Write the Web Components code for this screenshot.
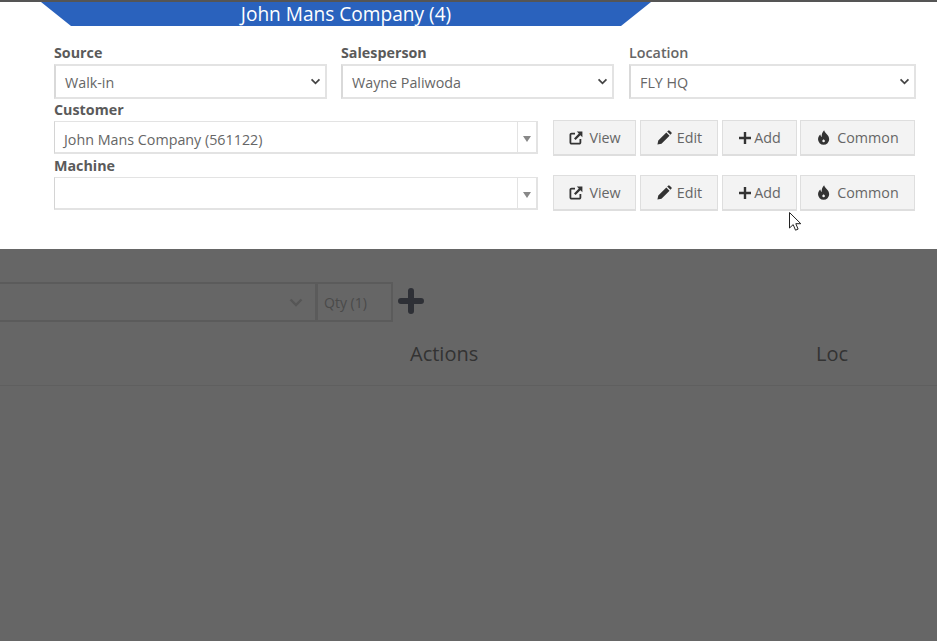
<!DOCTYPE html>
<html>
<head>
<meta charset="utf-8">
<style>
  html, body { margin: 0; height: 100%; overflow: hidden; background: #666; }
  body { font-family: "Open Sans", "Liberation Sans", sans-serif; color: #555; }
</style>
</head>
<body>
<order-panel>
  <order-banner slot="banner">John Mans Company (4)</order-banner>
  <div slot="selects">
    <form-select label="Source" value="Walk-in"></form-select>
    <form-select label="Salesperson" value="Wayne Paliwoda"></form-select>
    <form-select label="Location" value="FLY HQ" light style="margin-left:1px"></form-select>
  </div>
  <lookup-row label="Customer" value="John Mans Company (561122)"></lookup-row>
  <lookup-row label="Machine" value="" compact></lookup-row>
</order-panel>
<dim-area></dim-area>
<mouse-cursor></mouse-cursor>

<script>
const ICONS = {
  view: `<svg viewBox="0 0 14 14" width="14" height="14"><path d="M6 2.600H2.600A1.200 1.200 0 0 0 1.400 3.800v7.600a1.200 1.200 0 0 0 1.200 1.200h7.600a1.200 1.200 0 0 0 1.200-1.200V8" fill="none" stroke="#333" stroke-width="1.800"/><path d="M7.800 .6h5.600v5.600l-2-2L6.600 9 5 7.400 9.800 2.600z" fill="#333"/></svg>`,
  edit: `<svg viewBox="0 0 14 14" width="15" height="15"><path d="M.4 13.600l.8-3.800 7.500-7.500 3 3-7.500 7.500zM9.500 1.500l.9-.9a1 1 0 0 1 1.400 0l1.600 1.600a1 1 0 0 1 0 1.400l-.9.9z" fill="#333"/></svg>`,
  add: `<svg viewBox="0 0 14 14" width="14" height="14"><path d="M5.800 1h2.400v4.800H13v2.400H8.200V13H5.800V8.200H1V5.800h4.800z" fill="#333"/></svg>`,
  common: `<svg viewBox="0 0 14 14" width="15" height="15"><path fill-rule="evenodd" d="M7.600.3c.4 2.600 4.700 4.300 4.700 8.300a5.200 5.200 0 0 1-10.400 0c0-2 1-3.300 2.200-4.300.1 1.100.5 1.800 1.200 2.200C5.200 4.300 5.900 2 7.600.3zM7.100 8.600c-.6.600-1.200 1-1.200 1.700a1.200 1.200 0 0 0 2.400 0c0-.7-.6-1.100-1.200-1.700z" fill="#333"/></svg>`
};
const CHEVRON = `<svg viewBox="0 0 12 8" width="11" height="7"><path d="M1.500 1.500L6 6l4.500-4.500" fill="none" stroke="#444" stroke-width="2"/></svg>`;

class OrderPanel extends HTMLElement {
  constructor() {
    super();
    this.attachShadow({ mode: "open" });
    this.shadowRoot.innerHTML = `
      <style>
        :host{
          display:block;
          height:247px;
          background:#fff;
          border-top:2px solid #555;
          border-bottom:1px solid #d8d8d8;
          margin-bottom:-1px;
        }
        #body{
          display:flex;
          flex-direction:column;
          padding:17px 21px 0 54px;
        }
        ::slotted([slot="selects"]){
          display:grid;
          grid-template-columns:273px 273px 288px;
          column-gap:14px;
        }
      </style>
      <slot name="banner"></slot>
      <div id="body">
        <slot name="selects"></slot>
        <slot></slot>
      </div>
    `;
  }
}
customElements.define("order-panel", OrderPanel);

class OrderBanner extends HTMLElement {
  constructor() {
    super();
    this.attachShadow({ mode: "open" });
    this.shadowRoot.innerHTML = `
      <style>
        :host{
          display:block;
          height:24px;
          margin:0 286px 0 41px;
          background:#2a62bd;
          clip-path:polygon(0 0,100% 0,580px 100%,30px 100%);
          color:#fff;
          font-size:19.1px;
          line-height:25px;
          text-align:center;
        }
      </style>
      <slot></slot>
    `;
  }
}
customElements.define("order-banner", OrderBanner);

class FormSelect extends HTMLElement {
  constructor() {
    super();
    this.attachShadow({ mode: "open" });
    const light = this.hasAttribute("light");
    this.shadowRoot.innerHTML = `
      <style>
        :host{ display:block; }
        label{
          display:block;
          font-size:14.3px;
          font-weight:${light ? 600 : 700};
          line-height:19px;
          color:${light ? "#666" : "#5a5a5a"};
          margin-bottom:2px;
        }
        #box{
          display:flex;
          align-items:center;
          justify-content:space-between;
          height:35px;
          box-sizing:border-box;
          padding:0 4px 0 9px;
          border:2px solid #e3e3e3;
          border-left-color:#d9d9d9;
          background:#fff;
          font-size:14.3px;
          color:#666;
        }
        #box span{ padding-top:1px; }
      </style>
      <label>${this.getAttribute("label")}</label>
      <div id="box"><span>${this.getAttribute("value")}</span>${CHEVRON}</div>
    `;
  }
}
customElements.define("form-select", FormSelect);

class ActionButton extends HTMLElement {
  constructor() {
    super();
    this.attachShadow({ mode: "open" });
    this.shadowRoot.innerHTML = `
      <style>
        :host{
          display:flex;
          align-items:center;
          justify-content:center;
          gap:${this.getAttribute("gap") || 6}px;
          box-sizing:border-box;
          height:100%;
          width:${this.getAttribute("w")}px;
          padding-left:${this.getAttribute("pad") || 0}px;
          background:#f3f3f3;
          border:1px solid #dedede;
          border-bottom-width:2px;
          font-size:14.3px;
          color:#666;
        }
        svg{ display:block; flex:none; }
      </style>
      ${ICONS[this.getAttribute("icon")]}<slot></slot>
    `;
  }
}
customElements.define("action-button", ActionButton);

class LookupRow extends HTMLElement {
  constructor() {
    super();
    this.attachShadow({ mode: "open" });
    this.shadowRoot.innerHTML = `
      <style>
        :host{
          display:grid;
          grid-template-columns:484px 1fr;
          column-gap:15px;
          height:56px;
        }
        label{
          display:block;
          font-size:14.3px;
          font-weight:700;
          line-height:19px;
          color:#5a5a5a;
          margin-top:1px;
        }
        #combo{
          display:flex;
          align-items:stretch;
          height:33px;
          box-sizing:border-box;
          border:2px solid #e3e3e3;
          border-top-width:1px;
          border-left:1px solid #d4d4d4;
          margin-top:2px;
          background:#fff;
        }
        #text{
          flex:1;
          padding:4px 0 0 9px;
          font-size:14.3px;
          line-height:28px;
          color:#666;
          height:26px;
        }
        #arrow{
          width:18px;
          border-left:1px solid #e3e3e3;
          display:flex;
          align-items:center;
          justify-content:center;
        }
        #arrow i{
          width:0;height:0;
          margin-top:3px;
          border:4px solid transparent;
          border-top:6px solid #888;
          border-bottom:0;
        }
        #actions{
          display:flex;
          gap:4px;
          height:36px;
          margin-top:21px;
        }
        :host([compact]) #actions{ margin-top:20px; }
        #actions action-button:nth-child(3){ margin-right:-1px; }
      </style>
      <div>
        <label>${this.getAttribute("label")}</label>
        <div id="combo"><div id="text">${this.getAttribute("value")}</div><div id="arrow"><i></i></div></div>
      </div>
      <div id="actions">
        <action-button icon="view" w="83" pad="1">View</action-button>
        <action-button icon="edit" w="78" gap="5" pad="1">Edit</action-button>
        <action-button icon="add" w="75" gap="2">Add</action-button>
        <action-button icon="common" w="115" gap="6">Common</action-button>
      </div>
    `;
  }
}
customElements.define("lookup-row", LookupRow);

class DimArea extends HTMLElement {
  constructor() {
    super();
    this.attachShadow({ mode: "open" });
    this.shadowRoot.innerHTML = `
      <style>
        :host{ display:block; height:392px; background:#666; }
        #line{
          display:flex;
          align-items:stretch;
          height:40px;
          padding-top:33px;
        }
        #pick{
          width:317px;
          box-sizing:border-box;
          border:2px solid #5b5b5b;
          border-left:0;
          display:flex;
          align-items:center;
          justify-content:flex-end;
          padding-right:12px;
        }
        #qty{
          width:77px;
          box-sizing:border-box;
          margin-left:-1px;
          border:2px solid #5b5b5b;
          padding-left:6px;
          font-size:14px;
          line-height:38px;
          color:#4a4a4a;
        }
        #plus{ margin:6px 0 0 5px; display:block; }
        #head{
          display:grid;
          grid-template-columns:410px 406px 1fr;
          height:64px;
          box-sizing:border-box;
          border-bottom:1px solid #5f5f5f;
          font-size:20px;
          line-height:64px;
          color:#333;
        }
      </style>
      <div id="line">
        <div id="pick"><svg viewBox="0 0 14 9" width="14" height="9"><path d="M1.500 1.500L7 7l5.500-5.500" fill="none" stroke="#565656" stroke-width="2.400"/></svg></div>
        <div id="qty">Qty (1)</div>
        <svg id="plus" viewBox="0 0 26 26" width="26" height="26"><path d="M13 3v20M3 13h20" fill="none" stroke="#2e3036" stroke-width="6" stroke-linecap="round"/></svg>
      </div>
      <div id="head"><span></span><span>Actions</span><span>Loc</span></div>
    `;
  }
}
customElements.define("dim-area", DimArea);

class MouseCursor extends HTMLElement {
  constructor() {
    super();
    this.attachShadow({ mode: "open" });
    this.shadowRoot.innerHTML = `
      <style>
        :host{ position:absolute; left:789px; top:212px; display:block; width:13px; height:20px; }
        svg{ display:block; }
      </style>
      <svg viewBox="0 0 13 20" width="13" height="20"><path d="M.5.500v15.500l3.700-3.400 2.300 5.600 2.600-1.100-2.300-5.400h5z" fill="#fff" stroke="#222" stroke-width="1"/></svg>
    `;
  }
}
customElements.define("mouse-cursor", MouseCursor);
</script>
</body>
</html>
